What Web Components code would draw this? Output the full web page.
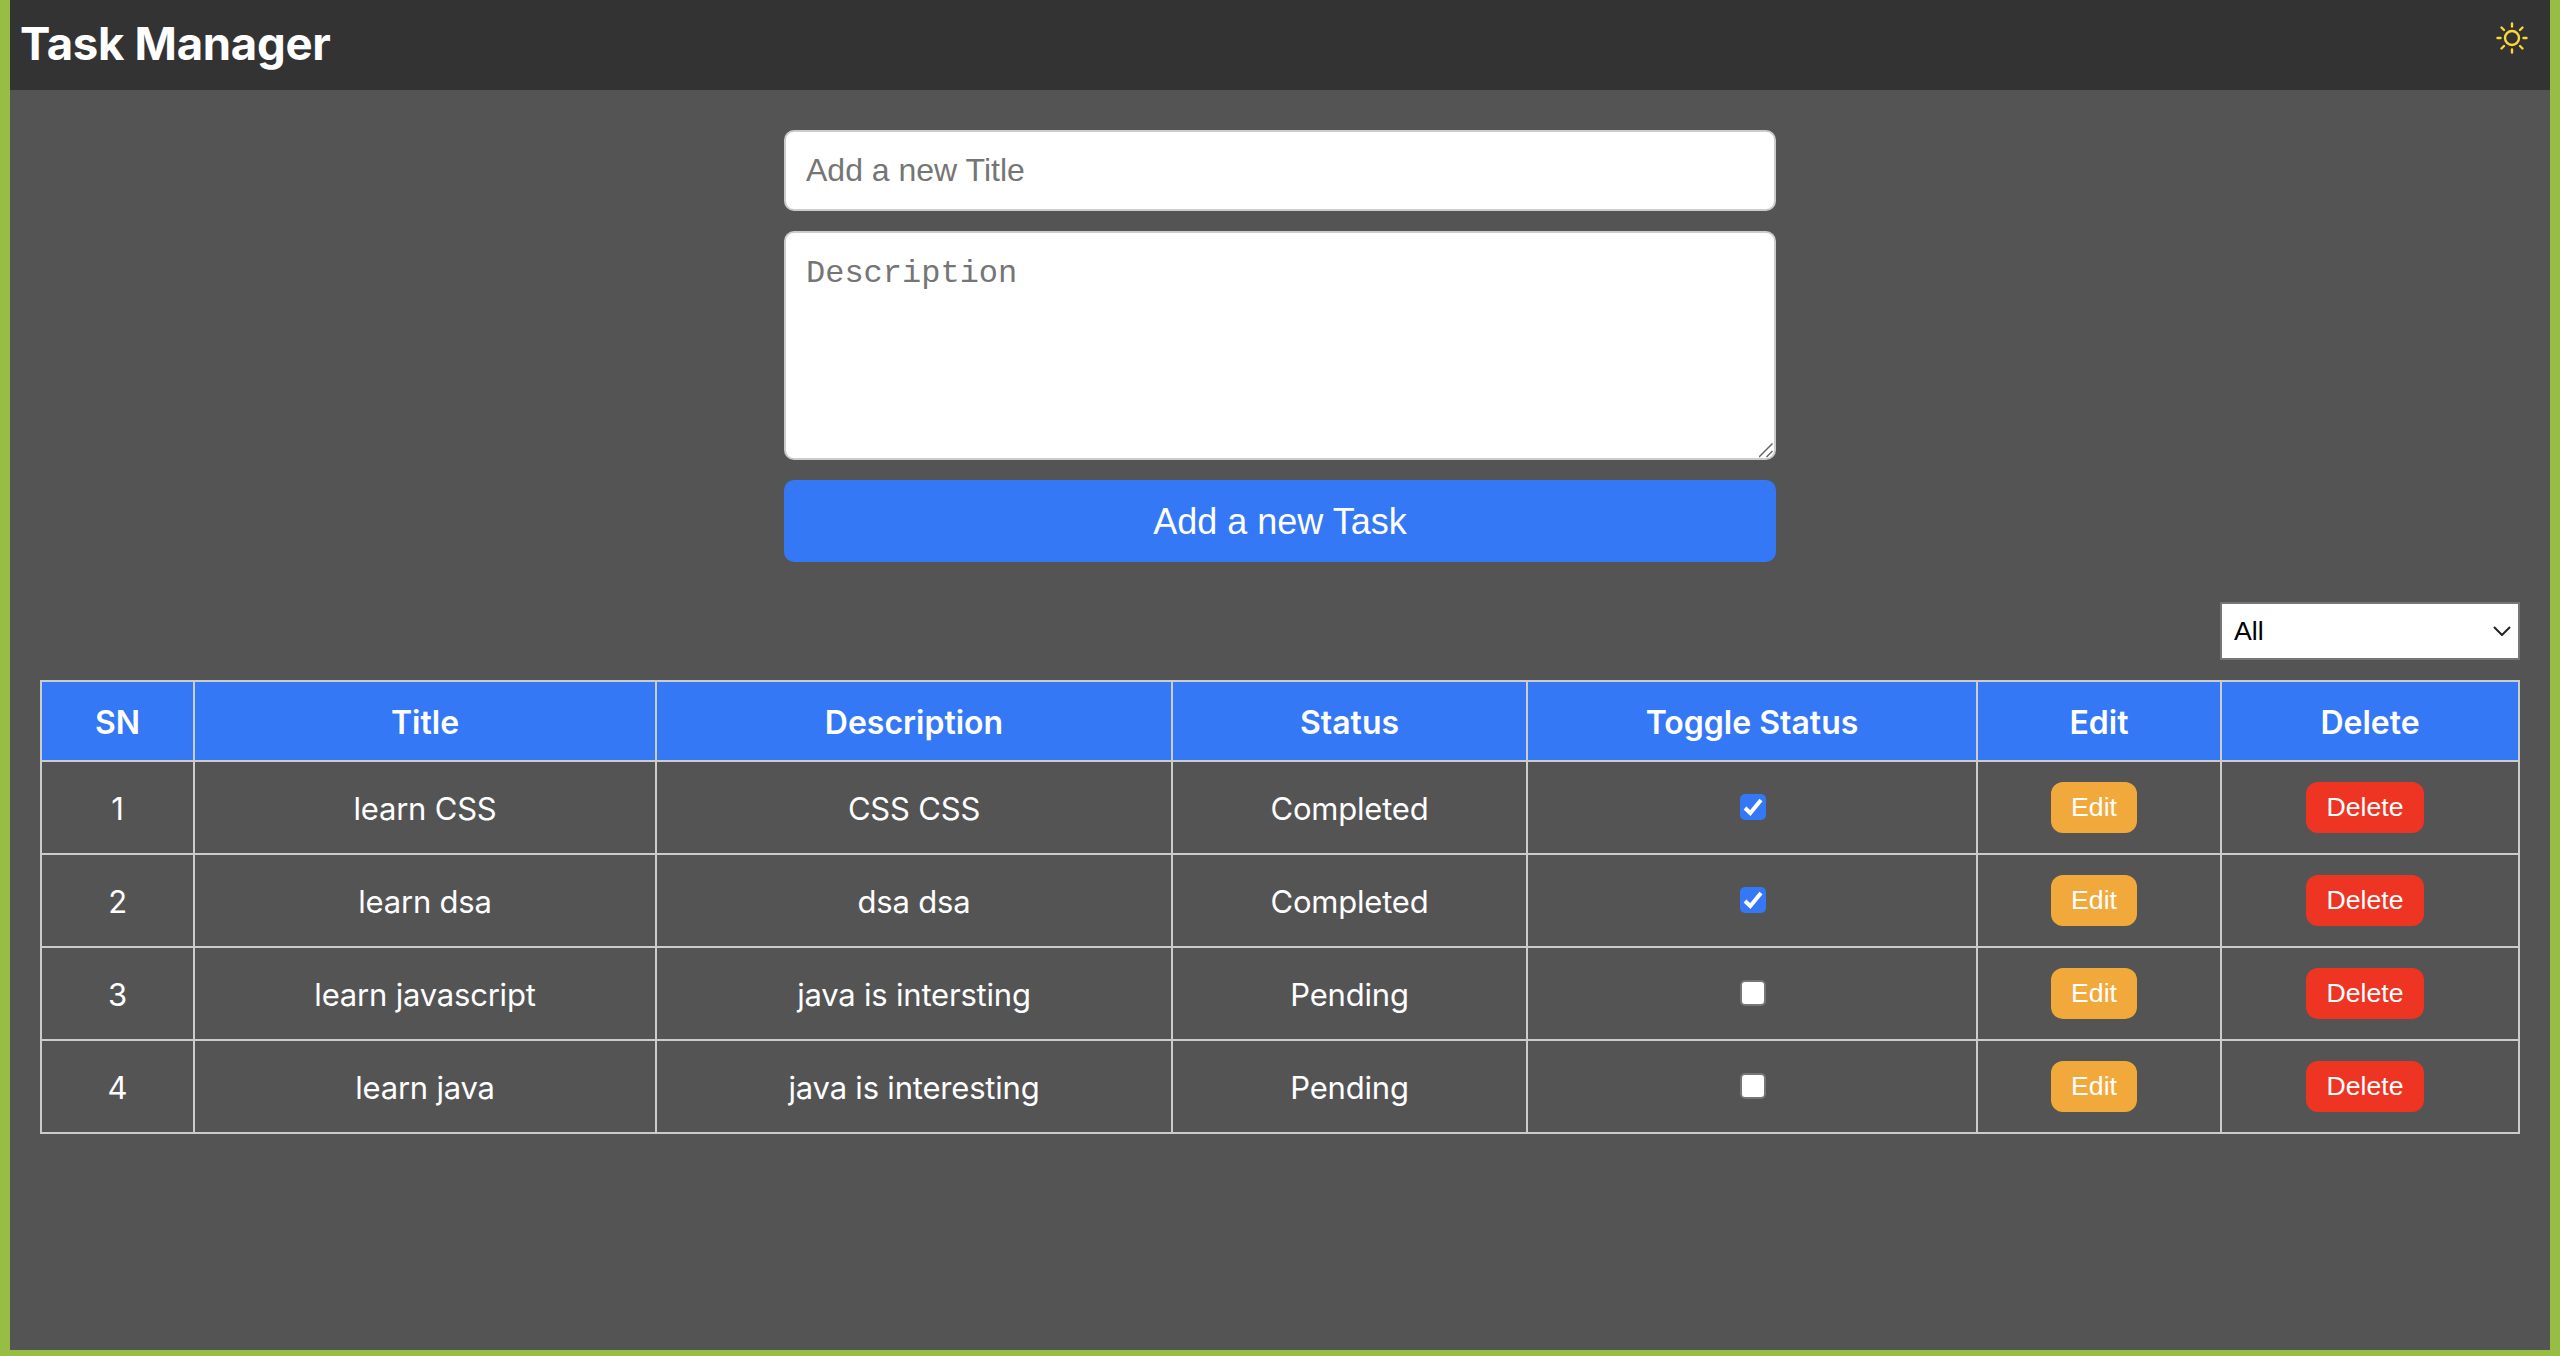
<!DOCTYPE html>
<html lang="en">
<head>
<meta charset="utf-8">
<title>Task Manager</title>
<style>
  html, body { margin: 0; height: 100%; }
  body {
    background: #97bd45;
    padding: 0 10px 6px;
    box-sizing: border-box;
    overflow: hidden;
  }
</style>
</head>
<body>
<task-app></task-app>

<script>
// header bar with title and theme icon
class AppHeader extends HTMLElement {
  constructor() {
    super();
    this.attachShadow({ mode: 'open' }).innerHTML = `
      <style>
        :host {
          display: flex;
          align-items: flex-start;
          justify-content: space-between;
          height: 90px;
          background: #333;
          flex: none;
        }
        h1 {
          margin: 0;
          padding: 20px 0 0 10px;
          font: 700 45.5px/48px Inter, sans-serif;
          letter-spacing: -0.3px;
          color: #fff;
        }
        svg { display: block; margin: 22px 22px 0 0; }
      </style>
      <h1><slot></slot></h1>
      <svg width="32" height="32" viewBox="0 0 32 32" fill="none" stroke="#fdd835" stroke-width="2.4" stroke-linecap="round">
        <circle cx="16" cy="16" r="7"></circle>
        <path d="M16 1.5v3M16 27.5v3M1.5 16h3M27.5 16h3M5.5 5.5l2.5 2.5M24 24l2.5 2.5M5.5 26.5l2.5-2.5M24 8l2.5-2.5"></path>
      </svg>
    `;
  }
}

// form for new tasks
class TaskForm extends HTMLElement {
  constructor() {
    super();
    this.attachShadow({ mode: 'open' }).innerHTML = `
      <style>
        :host {
          display: flex;
          flex-direction: column;
          gap: 20px;
          width: 992px;
          margin: 40px auto 0;
        }
        input, textarea {
          display: block;
          box-sizing: border-box;
          width: 100%;
          margin: 0;
          border: 2px solid #ccc;
          border-radius: 10px;
          background: #fff;
          padding: 0 20px;
          font-size: 32px;
          outline: none;
        }
        input { height: 81px; font-family: "Liberation Sans", Arial, sans-serif; }
        textarea {
          height: 229px;
          padding-top: 22px;
          line-height: 37px;
          font-family: "Liberation Mono", monospace;
          resize: vertical;
        }
        textarea::-webkit-resizer {
          background: url("data:image/svg+xml,%3Csvg xmlns='http://www.w3.org/2000/svg' width='15' height='15'%3E%3Cpath d='M0 14L13.500 0.500M7.500 14L13.500 8' fill='none' stroke='%23666' stroke-width='1.500'/%3E%3C/svg%3E") no-repeat;
        }
        ::placeholder { color: #757575; opacity: 1; }
        button {
          height: 82px;
          padding: 2px 0 0;
          border: 0;
          border-radius: 10px;
          background: #3478f6;
          color: #fff;
          font: 36px "Liberation Sans", Arial, sans-serif;
        }
      </style>
      <input type="text" placeholder="Add a new Title">
      <textarea placeholder="Description"></textarea>
      <button type="button">Add a new Task</button>
    `;
  }
}

// status filter above the table
class StatusFilter extends HTMLElement {
  constructor() {
    super();
    this.attachShadow({ mode: 'open' }).innerHTML = `
      <style>
        :host {
          display: flex;
          justify-content: flex-end;
          margin: 40px 0 20px;
        }
        select {
          appearance: none;
          box-sizing: border-box;
          width: 300px;
          height: 58px;
          margin: 0;
          padding: 0 12px;
          border: 2px solid #767676;
          border-radius: 0;
          color: #000;
          font: 26.67px "Liberation Sans", Arial, sans-serif;
          background: #fff url("data:image/svg+xml,%3Csvg xmlns='http://www.w3.org/2000/svg' width='18' height='10'%3E%3Cpath d='M1 1l8 8 8-8' fill='none' stroke='%23222' stroke-width='2'/%3E%3C/svg%3E") no-repeat right 7px center;
        }
      </style>
      <select>
        <option>All</option>
        <option>Completed</option>
        <option>Pending</option>
      </select>
    `;
  }
}

class TaskButton extends HTMLElement {
  constructor() {
    super();
    this.attachShadow({ mode: 'open' }).innerHTML = `
      <style>
        :host {
          display: block;
          width: fit-content;
          margin: 0 auto;
          transform: translateX(-5px);
        }
        button {
          display: block;
          height: 51px;
          padding: 0 20px;
          border: 0;
          border-radius: 12px;
          color: #fff;
          font: 26.67px "Liberation Sans", Arial, sans-serif;
          background: var(--btn-color);
        }
      </style>
      <button type="button"><slot></slot></button>
    `;
  }
}

class TaskCheck extends HTMLElement {
  constructor() {
    super();
    const checked = this.hasAttribute('checked') ? 'checked' : '';
    this.attachShadow({ mode: 'open' }).innerHTML = `
      <style>
        :host { display: block; width: 26px; margin: 0 auto; transform: translate(1px, -1px); }
        input {
          appearance: none;
          display: block;
          box-sizing: border-box;
          width: 26px;
          height: 26px;
          margin: 0;
          border: 2px solid #767676;
          border-radius: 5px;
          background: #fff;
        }
        input:checked {
          border: 0;
          background: #3478f6 url("data:image/svg+xml,%3Csvg xmlns='http://www.w3.org/2000/svg' width='26' height='26'%3E%3Cpath d='M5 14l5.300 5L21 6' fill='none' stroke='%23fff' stroke-width='4'/%3E%3C/svg%3E") no-repeat center;
        }
      </style>
      <input type="checkbox" ${checked}>
    `;
  }
}

class TaskTable extends HTMLElement {
  constructor() {
    super();
    this._shadowRoot = this.attachShadow({ mode: 'open' });
  }

  set tasks(tasks) {
    this._tasks = tasks;
    this.render();
  }

  render() {
    const rows = this._tasks.map((task, i) => `
      <tr>
        <td>${i + 1}</td>
        <td>${task.title}</td>
        <td>${task.description}</td>
        <td>${task.done ? 'Completed' : 'Pending'}</td>
        <td class="ctl"><task-check ${task.done ? 'checked' : ''}></task-check></td>
        <td class="ctl"><task-button style="--btn-color:#f2a93b">Edit</task-button></td>
        <td class="ctl"><task-button style="--btn-color:#ee3524">Delete</task-button></td>
      </tr>
    `).join('');

    this._shadowRoot.innerHTML = `
      <style>
        :host { display: block; }
        table {
          width: 100%;
          table-layout: fixed;
          border-collapse: collapse;
          color: #fff;
          font: 31px Inter, sans-serif;
          letter-spacing: -0.2px;
        }
        th, td {
          border: 2px solid #ccc;
          padding: 2px 0 0;
          text-align: center;
        }
        th {
          height: 76px;
          background: #3478f6;
          font: 600 32px Inter, sans-serif;
          letter-spacing: 0;
        }
        td { height: 89px; }
        td.ctl { padding: 0; height: 91px; }
      </style>
      <table>
        <colgroup>
          <col style="width:153px"><col style="width:462px"><col style="width:516px">
          <col style="width:355px"><col style="width:450px"><col style="width:244px"><col>
        </colgroup>
        <thead>
          <tr>
            <th>SN</th><th>Title</th><th>Description</th><th>Status</th>
            <th>Toggle Status</th><th>Edit</th><th>Delete</th>
          </tr>
        </thead>
        <tbody>${rows}</tbody>
      </table>
    `;
  }
}

class TaskApp extends HTMLElement {
  constructor() {
    super();
    this.attachShadow({ mode: 'open' }).innerHTML = `
      <style>
        :host {
          display: flex;
          flex-direction: column;
          height: 1350px;
          background: #545454;
        }
        .content { padding: 0 30px; }
      </style>
      <app-header>Task Manager</app-header>
      <task-form></task-form>
      <div class="content">
        <status-filter></status-filter>
        <task-table></task-table>
      </div>
    `;
  }

  connectedCallback() {
    this.shadowRoot.querySelector('task-table').tasks = [
      { title: 'learn CSS', description: 'CSS CSS', done: true },
      { title: 'learn dsa', description: 'dsa dsa', done: true },
      { title: 'learn javascript', description: 'java is intersting', done: false },
      { title: 'learn java', description: 'java is interesting', done: false }
    ];
  }
}

customElements.define('app-header', AppHeader);
customElements.define('task-form', TaskForm);
customElements.define('status-filter', StatusFilter);
customElements.define('task-button', TaskButton);
customElements.define('task-check', TaskCheck);
customElements.define('task-table', TaskTable);
customElements.define('task-app', TaskApp);
</script>
</body>
</html>
